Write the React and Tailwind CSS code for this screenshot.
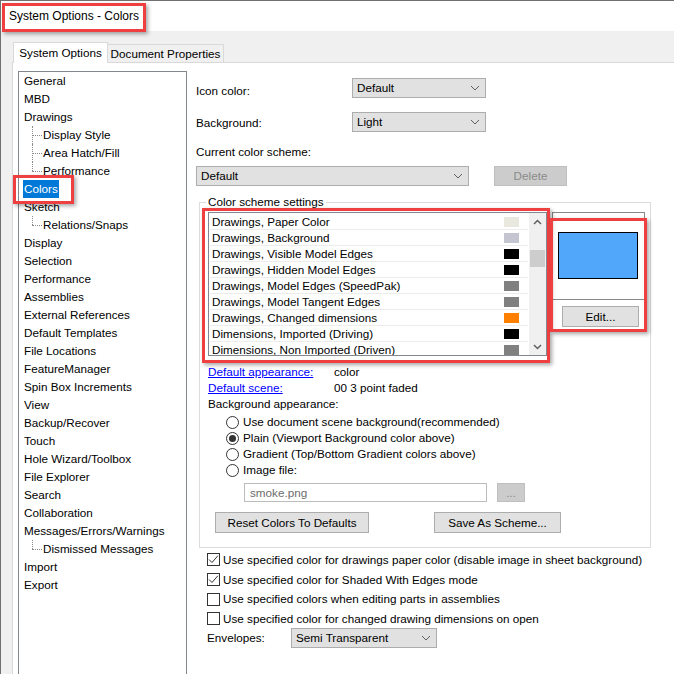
import React from "react";

function Chevron() {
  return (
    <svg width="10" height="6" viewBox="0 0 10 6">
      <path d="M1 1L5 5L9 1" fill="none" stroke="#606060" strokeWidth="1" />
    </svg>
  );
}

function Select({ value, className }) {
  return (
    <div className={`flex h-[20px] items-center justify-between border border-[#adadad] bg-[#e1e1e1] pl-[4px] pr-[5px] ${className}`}>
      <span>{value}</span>
      <Chevron />
    </div>
  );
}

function Radio({ checked }) {
  return (
    <span className="flex h-[13px] w-[13px] shrink-0 items-center justify-center rounded-full border border-[#333333] bg-white">
      {checked && <span className="h-[7px] w-[7px] rounded-full bg-[#333333]" />}
    </span>
  );
}

function Check({ checked }) {
  return (
    <span className="flex h-[13px] w-[13px] shrink-0 items-center justify-center border border-[#333333] bg-white">
      {checked && (
        <svg width="11" height="11" viewBox="0 0 11 11">
          <path d="M1 5.5L4 8.5L9.8 1.8" fill="none" stroke="#333333" strokeWidth="1" />
        </svg>
      )}
    </span>
  );
}

const tree = [
  ["General", 0],
  ["MBD", 0],
  ["Drawings", 0],
  ["Display Style", 1],
  ["Area Hatch/Fill", 1],
  ["Performance", 2],
  ["Colors", 3],
  ["Sketch", 0],
  ["Relations/Snaps", 2],
  ["Display", 0],
  ["Selection", 0],
  ["Performance", 0],
  ["Assemblies", 0],
  ["External References", 0],
  ["Default Templates", 0],
  ["File Locations", 0],
  ["FeatureManager", 0],
  ["Spin Box Increments", 0],
  ["View", 0],
  ["Backup/Recover", 0],
  ["Touch", 0],
  ["Hole Wizard/Toolbox", 0],
  ["File Explorer", 0],
  ["Search", 0],
  ["Collaboration", 0],
  ["Messages/Errors/Warnings", 0],
  ["Dismissed Messages", 2],
  ["Import", 0],
  ["Export", 0],
];

const rows = [
  ["Drawings, Paper Color", "#e8e8df"],
  ["Drawings, Background", "#c3c6d1"],
  ["Drawings, Visible Model Edges", "#000000"],
  ["Drawings, Hidden Model Edges", "#000000"],
  ["Drawings, Model Edges (SpeedPak)", "#808080"],
  ["Drawings, Model Tangent Edges", "#808080"],
  ["Drawings, Changed dimensions", "#ff8000"],
  ["Dimensions, Imported (Driving)", "#000000"],
  ["Dimensions, Non Imported (Driven)", "#808080"],
];

function TreeRow({ label, kind }) {
  if (kind === 1 || kind === 2) {
    return (
      <div className="flex h-[18px] items-center">
        <span className="relative h-[18px] w-[19px] shrink-0">
          <span className={`absolute left-[8px] top-0 border-l border-dotted border-[#8a8a8a] ${kind === 1 ? "h-[18px]" : "h-[9px]"}`} />
          <span className="absolute left-[8px] top-[9px] w-[10px] border-t border-dotted border-[#8a8a8a]" />
        </span>
        <span>{label}</span>
      </div>
    );
  }
  if (kind === 3) {
    return (
      <div className="flex h-[18px] items-center">
        <span className="-ml-[1px] flex h-[18px] items-center bg-[#0078d7] px-[1px] text-white">{label}</span>
      </div>
    );
  }
  return <div className="flex h-[18px] items-center">{label}</div>;
}

export default function App() {
  return (
    <div className="relative h-[674px] w-[674px] overflow-hidden border-l border-t border-[#707070] bg-[#f0f0f0] font-['Liberation_Sans',Arial,sans-serif] text-[11.7px] leading-[16px] text-black">
      {/* title bar */}
      <div className="flex h-[30px] items-center bg-white pl-[8px] text-[12px]">System Options - Colors</div>

      {/* tabs */}
      <div className="flex items-end pl-[12px] pt-[11px]">
        <div className="relative z-10 -mb-px flex h-[21px] w-[95px] items-center justify-center border border-b-0 border-[#d9d9d9] bg-white">
          System Options
        </div>
        <div className="flex h-[18px] w-[116px] items-center justify-center border border-b-0 border-l-0 border-[#d9d9d9] bg-[#f0f0f0]">
          Document Properties
        </div>
      </div>

      {/* panel */}
      <div className="ml-[11px] flex h-[620px] border-l border-t border-[#d9d9d9] bg-white pl-[5px]">
        {/* tree */}
        <div className="mt-[8px] h-[620px] w-[169px] shrink-0 border border-[#828790] bg-white pl-[5px]">
          {tree.map(([label, kind], i) => (
            <TreeRow key={i} label={label} kind={kind} />
          ))}
        </div>

        {/* right column */}
        <div className="ml-[9px] flex flex-col pt-[15px]">
          <div className="flex h-[20px] items-center">
            <span className="mt-[5px] w-[156px]">Icon color:</span>
            <Select value="Default" className="w-[134px]" />
          </div>
          <div className="mt-[14px] flex h-[20px] items-center">
            <span className="mt-[2px] w-[156px]">Background:</span>
            <Select value="Light" className="w-[134px]" />
          </div>
          <div className="mt-[12px] h-[16px]">Current color scheme:</div>
          <div className="mt-[6px] flex h-[20px] items-center">
            <Select value="Default" className="w-[273px]" />
            <div className="ml-[25px] flex h-[20px] w-[73px] items-center justify-center border border-[#bfbfbf] bg-[#cccccc] text-[#8a8a8a]">
              Delete
            </div>
          </div>

          {/* group box */}
          <fieldset className="ml-[3px] mt-[8px] w-[452px] border border-[#dcdcdc] pb-[14px] pl-[6px]">
            <legend className="px-[2px] leading-[16px]">Color scheme settings</legend>
            <div className="ml-[2px] mt-[2px] flex">
              {/* list */}
              <div className="flex h-[144px] w-[339px] overflow-hidden border border-[#828790] bg-white">
                <div className="flex-1 px-[1px] pt-[1px]">
                  {rows.map(([label, color], i) => (
                    <div key={i} className="flex h-[16px] items-center justify-between border-b border-[#ececec] pl-[2px] pr-[9px]">
                      <span className="whitespace-nowrap">{label}</span>
                      <span className="h-[10px] w-[15px]" style={{ backgroundColor: color }} />
                    </div>
                  ))}
                </div>
                <div className="flex w-[17px] flex-col bg-[#f0f0f0]">
                  <div className="flex h-[17px] items-center justify-center">
                    <svg width="9" height="6" viewBox="0 0 9 6">
                      <path d="M1 5L4.5 1.5L8 5" fill="none" stroke="#606060" strokeWidth="1.5" />
                    </svg>
                  </div>
                  <div className="mx-[1px] mt-[20px] h-[17px] bg-[#cdcdcd]" />
                  <div className="mt-auto flex h-[17px] items-center justify-center">
                    <svg width="9" height="6" viewBox="0 0 9 6">
                      <path d="M1 1L4.5 4.5L8 1" fill="none" stroke="#606060" strokeWidth="1.5" />
                    </svg>
                  </div>
                </div>
              </div>

              {/* preview */}
              <div className="ml-[5px] flex flex-col">
                <div className="h-[88px] w-[93px] border border-[#888888] bg-white pl-[5px] pt-[19px]">
                  <div className="h-[47px] w-[80px] border border-black bg-[#51a7f9]" />
                </div>
                <div className="ml-[10px] mt-[6px] flex h-[21px] w-[77px] items-center justify-center border border-[#adadad] bg-[#e1e1e1]">
                  Edit...
                </div>
              </div>
            </div>

            <div className="ml-[2px] mt-[8px] flex h-[16px] items-center">
              <span className="w-[126px] text-[#0000ff] underline">Default appearance:</span>
              <span>color</span>
            </div>
            <div className="ml-[2px] flex h-[16px] items-center">
              <span className="w-[126px] text-[#0000ff] underline">Default scene:</span>
              <span>00 3 point faded</span>
            </div>
            <div className="ml-[2px] flex h-[16px] items-center">Background appearance:</div>
            <div className="ml-[20px] mt-[2px] flex flex-col">
              {[
                ["Use document scene background(recommended)", false],
                ["Plain (Viewport Background color above)", true],
                ["Gradient (Top/Bottom Gradient colors above)", false],
                ["Image file:", false],
              ].map(([t, c], i) => (
                <div key={i} className="flex h-[16px] items-center gap-[4px]">
                  <Radio checked={c} />
                  <span>{t}</span>
                </div>
              ))}
            </div>
            <div className="ml-[38px] mt-[5px] flex">
              <div className="flex h-[19px] w-[243px] items-center border border-[#bcbcbc] bg-white pl-[5px] text-[#6d6d6d]">smoke.png</div>
              <div className="ml-[10px] flex h-[19px] w-[28px] items-center justify-center border border-[#bfbfbf] bg-[#cccccc] text-[#8a8a8a]">
                ...
              </div>
            </div>
            <div className="ml-[9px] mt-[10px] flex">
              <div className="flex h-[21px] w-[154px] items-center justify-center border border-[#adadad] bg-[#e1e1e1]">
                Reset Colors To Defaults
              </div>
              <div className="ml-[65px] flex h-[21px] w-[127px] items-center justify-center border border-[#adadad] bg-[#e1e1e1]">
                Save As Scheme...
              </div>
            </div>
          </fieldset>

          {/* checkboxes */}
          <div className="mt-[2px] flex flex-col pl-[11px]">
            {[
              ["Use specified color for drawings paper color (disable image in sheet background)", true],
              ["Use specified color for Shaded With Edges mode", true],
              ["Use specified colors when editing parts in assemblies", false],
              ["Use specified color for changed drawing dimensions on open", false],
            ].map(([t, c], i) => (
              <div key={i} className="flex h-[19.7px] items-center gap-[3px] whitespace-nowrap">
                <Check checked={c} />
                <span>{t}</span>
              </div>
            ))}
            <div className="flex h-[19px] items-center">
              <span className="w-[84px]">Envelopes:</span>
              <Select value="Semi Transparent" className="h-[19px] w-[146px]" />
            </div>
          </div>
        </div>
      </div>

      {/* red annotation boxes */}
      <div className="absolute left-[1px] top-[2px] h-[29px] w-[144px] border-[3px] border-[#ee4040] shadow-[2px_2px_4px_rgba(0,0,0,0.35)]" />
      <div className="absolute left-[12px] top-[174px] h-[29px] w-[61px] border-[3px] border-[#ee4040] shadow-[2px_2px_4px_rgba(0,0,0,0.35)]" />
      <div className="absolute left-[201px] top-[207px] h-[155px] w-[348px] border-[3px] border-[#ee4040] shadow-[2px_2px_4px_rgba(0,0,0,0.35)]" />
      <div className="absolute left-[549px] top-[217px] h-[114px] w-[97px] border-[3px] border-[#ee4040] shadow-[2px_2px_4px_rgba(0,0,0,0.35)]" />
    </div>
  );
}
